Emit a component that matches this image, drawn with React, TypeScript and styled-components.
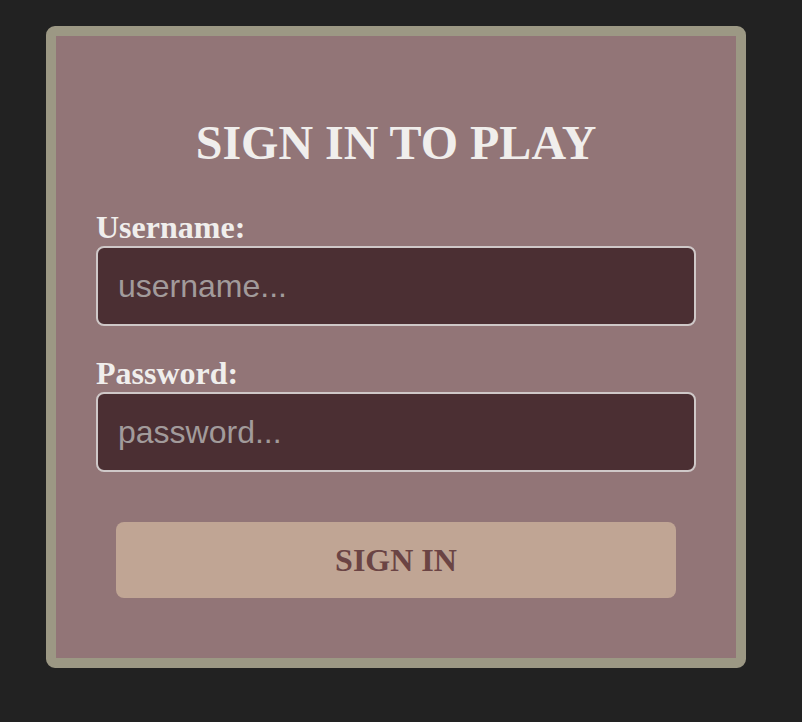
import React from 'react'
import styled, { createGlobalStyle } from 'styled-components'

const GlobalStyle = createGlobalStyle`
  html, body {
    margin: 0;
    padding: 0;
    background: #222222;
  }
  body {
    min-height: 722px;
    font-family: "Liberation Serif", "Times New Roman", serif;
  }
`

const Page = styled.div`
  padding: 26px 0 0 46px;
`

const Card = styled.form`
  width: 700px;
  height: 642px;
  box-sizing: border-box;
  border: 10px solid #9c9884;
  border-radius: 9px;
  background: #927577;
  padding: 80px 40px 0;
  display: flex;
  flex-direction: column;
`

const Title = styled.h1`
  margin: 0 0 42px;
  font-size: 48px;
  line-height: 54px;
  font-weight: 700;
  text-align: center;
  color: #f0eeec;
`

const Field = styled.div<{ gap?: number }>`
  display: flex;
  flex-direction: column;
  gap: 4px;
  margin-bottom: ${({ gap }) => gap ?? 0}px;
`

const Label = styled.label`
  font-size: 32px;
  line-height: 30px;
  font-weight: 700;
  color: #f0eeec;
`

const Input = styled.input`
  height: 80px;
  box-sizing: border-box;
  border: 2px solid #cfc8c8;
  border-radius: 8px;
  background: #4b2f33;
  padding: 0 20px;
  font-family: "Liberation Sans", Arial, sans-serif;
  font-size: 32px;
  color: #f0eeec;
  outline: none;

  &::placeholder {
    color: #a29b9b;
  }
`

const Submit = styled.button`
  margin: 0 20px;
  height: 76px;
  border: none;
  border-radius: 8px;
  background: #c0a594;
  color: #6b4444;
  font-family: "Liberation Serif", "Times New Roman", serif;
  font-size: 32px;
  font-weight: 700;
  cursor: pointer;
`

export default function App() {
  return (
    <Page>
      <GlobalStyle />
      <Card onSubmit={(e) => e.preventDefault()}>
        <Title>SIGN IN TO PLAY</Title>
        <Field gap={32}>
          <Label htmlFor="username">Username:</Label>
          <Input id="username" type="text" placeholder="username..." />
        </Field>
        <Field gap={50}>
          <Label htmlFor="password">Password:</Label>
          <Input id="password" type="password" placeholder="password..." />
        </Field>
        <Submit type="submit">SIGN IN</Submit>
      </Card>
    </Page>
  )
}
